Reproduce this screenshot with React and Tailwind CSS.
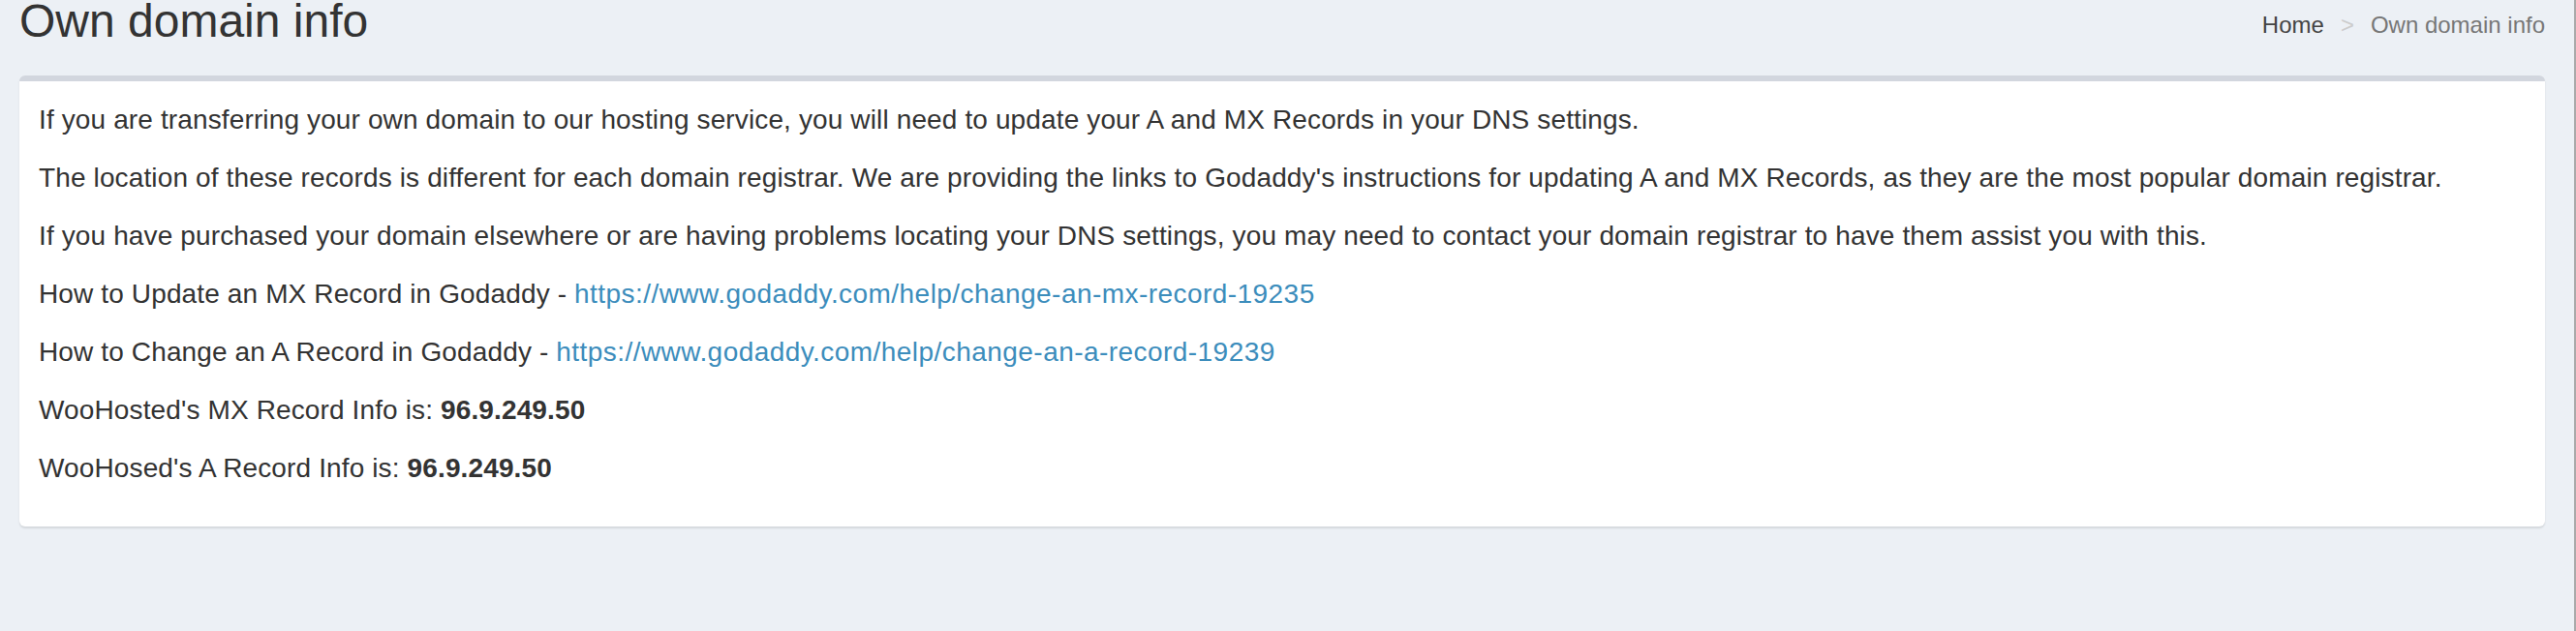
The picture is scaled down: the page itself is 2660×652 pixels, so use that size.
import React from 'react';

const Crumbs = () => (
  <ol className="flex items-center text-[24px] leading-[34px] mt-[7px]">
    <li><a href="#" className="text-[#444]">Home</a></li>
    <li className="px-[17px] text-[#ccc]">&gt;</li>
    <li className="text-[#777]">Own domain info</li>
  </ol>
);

const linkCls = 'text-[#3c8dbc] tracking-[0.45px]';

const App = () => {
  return (
    <div
      className="min-h-[652px] bg-[#ecf0f5] border-r-2 border-[#a9a9a9] text-[#333]"
      style={{ fontFamily: '"Liberation Sans", Arial, sans-serif' }}
    >
      <div className="pl-[20px] pr-[30px]">
        <div className="flex items-start justify-between h-[78px] pt-[2px]">
          <h1 className="text-[48px] leading-[40px] font-normal">Own domain info</h1>
          <Crumbs />
        </div>

        <div className="bg-white rounded-[6px] border-t-[6px] border-[#d2d6de] shadow-[0_2px_2px_rgba(0,0,0,0.1)]">
          <div className="p-[20px] text-[28px] leading-[40px] tracking-[0.13px]">
            <p className="mb-[20px]">If you are transferring your own domain to our hosting service, you will need to update your A and MX Records in your DNS settings.</p>
            <p className="mb-[20px]">The location of these records is different for each domain registrar. We are providing the links to Godaddy's instructions for updating A and MX Records, as they are the most popular domain registrar.</p>
            <p className="mb-[20px]">If you have purchased your domain elsewhere or are having problems locating your DNS settings, you may need to contact your domain registrar to have them assist you with this.</p>
            <p className="mb-[20px]">How to Update an MX Record in Godaddy - <a href="#" className={linkCls}>https://www.godaddy.com/help/change-an-mx-record-19235</a></p>
            <p className="mb-[20px]">How to Change an A Record in Godaddy - <a href="#" className={linkCls}>https://www.godaddy.com/help/change-an-a-record-19239</a></p>
            <p className="mb-[20px]">WooHosted's MX Record Info is: <b className="font-bold">96.9.249.50</b></p>
            <p className="mb-[20px]">WooHosed's A Record Info is: <b className="font-bold">96.9.249.50</b></p>
          </div>
        </div>
      </div>
    </div>
  );
};

export default App;
